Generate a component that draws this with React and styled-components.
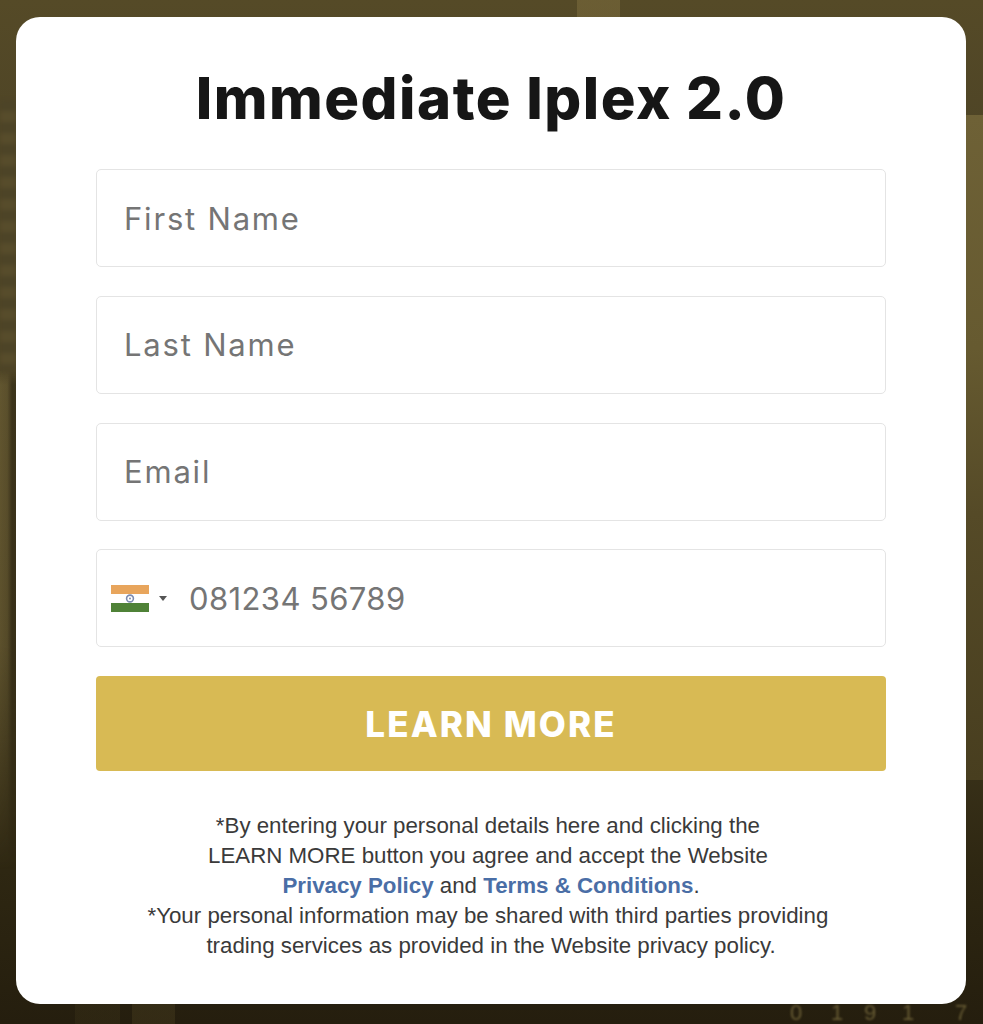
import React from "react";
import styled, {createGlobalStyle} from "styled-components";

const GlobalStyle = createGlobalStyle`
    html, body {
        margin: 0;
        padding: 0;
    }
    body {
        background: #2a2310;
        font-family: "Inter", "Liberation Sans", sans-serif;
    }
`;

const Page = styled.div`
    position: relative;
    box-sizing: border-box;
    width: 983px;
    height: 1024px;
    padding: 17px 17px 20px 16px;
    overflow: hidden;
    background:
        linear-gradient(90deg, transparent 577px, rgba(140, 122, 70, 0.4) 577px, rgba(140, 122, 70, 0.4) 620px, transparent 620px) top left / 100% 17px no-repeat,
        linear-gradient(90deg, transparent 75px, rgba(90, 78, 40, 0.16) 75px, rgba(90, 78, 40, 0.16) 120px, transparent 120px, transparent 132px, rgba(90, 78, 40, 0.28) 132px, rgba(90, 78, 40, 0.28) 175px, transparent 175px) bottom left / 100% 20px no-repeat,
        linear-gradient(180deg, #554a27 0%, #4f4526 12%, #4f4526 36%, #453c20 62%, #2e2712 85%, #251e0e 100%);
`;

const LeftGlow = styled.div`
    position: absolute;
    top: 370px;
    left: 0;
    width: 16px;
    height: 500px;
    background: linear-gradient(90deg, rgba(122, 107, 60, 0.45) 0%, rgba(122, 107, 60, 0.3) 45%, rgba(40, 33, 15, 0.45) 75%, rgba(40, 33, 15, 0.45) 100%);
    mask-image: linear-gradient(180deg, transparent 0%, #000 3%, #000 55%, transparent 100%);
`;

const LeftStripes = styled.div`
    position: absolute;
    top: 100px;
    left: 0;
    width: 16px;
    height: 270px;
    background: repeating-linear-gradient(180deg, #4d4427 0, #4d4427 11px, #574c2b 11px, #574c2b 22px);
    filter: blur(2px);
`;

const RightGlow = styled.div`
    position: absolute;
    top: 115px;
    right: 0;
    width: 17px;
    height: 665px;
    background: linear-gradient(180deg, #6e6136 0%, #665a30 35%, #554a27 60%, #483e1f 100%);
`;

const BackgroundDigits = styled.div`
    position: absolute;
    right: 15px;
    bottom: 3px;
    display: flex;
    font-family: "Liberation Sans", sans-serif;
    font-size: 22px;
    line-height: 16px;
    color: #665a33;
    filter: blur(1px);
`;

const Digit = styled.span`
    width: 14px;
    margin-left: ${props => props.$offset || 0}px;
    text-align: center;
`;

const Card = styled.div`
    position: relative;
    box-sizing: border-box;
    height: 987px;
    padding: 0 80px;
    display: flex;
    flex-direction: column;
    background: #fff;
    border-radius: 24px;
`;

const Title = styled.h1`
    margin: 0;
    height: 152px;
    line-height: 162px;
    font-size: 58px;
    font-weight: 800;
    letter-spacing: 1.5px;
    text-align: center;
    color: #161616;
`;

const Fields = styled.form`
    display: flex;
    flex-direction: column;
    gap: 28.75px;
`;

const Field = styled.div`
    box-sizing: border-box;
    height: 98px;
    display: flex;
    align-items: center;
    padding: 0 27px 0 14px;
    background: #fff;
    border: 1px solid #e4e4e4;
    border-radius: 5px;
`;

const Input = styled.input`
    flex: 1;
    min-width: 0;
    padding: 0 0 0 ${props => props.$inset || 0}px;
    border: 0;
    outline: 0;
    background: transparent;
    font-family: "Inter", "Liberation Sans", sans-serif;
    font-size: 31px;
    letter-spacing: ${props => props.$spacing}px;
    color: #757575;
    &::placeholder {
        color: #757575;
        opacity: 1;
    }
`;

const CountryPicker = styled.div`
    display: flex;
    align-items: center;
    gap: 10px;
    margin-right: 22px;
`;

const Caret = styled.span`
    width: 0;
    height: 0;
    border-left: 4px solid transparent;
    border-right: 4px solid transparent;
    border-top: 5px solid #555;
`;

const Button = styled.button`
    height: 95px;
    border: 0;
    border-radius: 4px;
    background: #d8ba54;
    color: #fff;
    font-family: "Inter", "Liberation Sans", sans-serif;
    font-size: 35px;
    font-weight: 800;
    letter-spacing: 2.1px;
`;

const Disclaimer = styled.p`
    margin: 40px -20px 0;
    font-family: "Liberation Sans", Arial, sans-serif;
    font-size: 22.3px;
    line-height: 30px;
    text-align: center;
    color: #3a3a3a;
`;

const PolicyLink = styled.a`
    font-weight: 700;
    color: #4a6ea6;
    text-decoration: none;
`;

const IndiaFlag = () => (
    <svg width = "38" height = "27" viewBox = "0 0 38 27" aria-hidden = "true">
        <rect width = "38" height = "27" rx = "1" fill = "#fff" />
        <rect width = "38" height = "9" y = "0" fill = "#e8a55c" />
        <rect width = "38" height = "9" y = "18" fill = "#4f8237" />
        <circle cx = "19" cy = "13.5" r = "3.4" fill = "none" stroke = "#7d8bb0" strokeWidth = "1.6" />
        <circle cx = "19" cy = "13.5" r = "1" fill = "#7d8bb0" />
    </svg>
);

const App = () => (
    <>
        <GlobalStyle />
        <Page>
            <LeftStripes />
            <LeftGlow />
            <RightGlow />
            <BackgroundDigits>
                <Digit>0</Digit>
                <Digit $offset = {27}>1</Digit>
                <Digit $offset = {19}>9</Digit>
                <Digit $offset = {24}>1</Digit>
                <Digit $offset = {39}>7</Digit>
            </BackgroundDigits>
            <Card>
                <Title>Immediate Iplex 2.0</Title>
                <Fields onSubmit = {e => e.preventDefault()}>
                    <Field>
                        <Input $inset = {13} $spacing = {1.8} type = "text" placeholder = "First Name" />
                    </Field>
                    <Field>
                        <Input $inset = {13} $spacing = {1.8} type = "text" placeholder = "Last Name" />
                    </Field>
                    <Field>
                        <Input $inset = {13} $spacing = {1.8} type = "email" placeholder = "Email" />
                    </Field>
                    <Field>
                        <CountryPicker>
                            <IndiaFlag />
                            <Caret />
                        </CountryPicker>
                        <Input $spacing = {0.4} type = "tel" placeholder = "081234 56789" />
                    </Field>
                    <Button type = "submit">LEARN MORE</Button>
                </Fields>
                <Disclaimer>
                    *By entering your personal details here and clicking the&nbsp;<br />
                    LEARN MORE button you agree and accept the Website&nbsp;<br />
                    <PolicyLink href = "#privacy">Privacy Policy</PolicyLink> and <PolicyLink href = "#terms">Terms &amp; Conditions</PolicyLink>.<br />
                    *Your personal information may be shared with third parties providing&nbsp;<br />
                    trading services as provided in the Website privacy policy.
                </Disclaimer>
            </Card>
        </Page>
    </>
);

export default App;
